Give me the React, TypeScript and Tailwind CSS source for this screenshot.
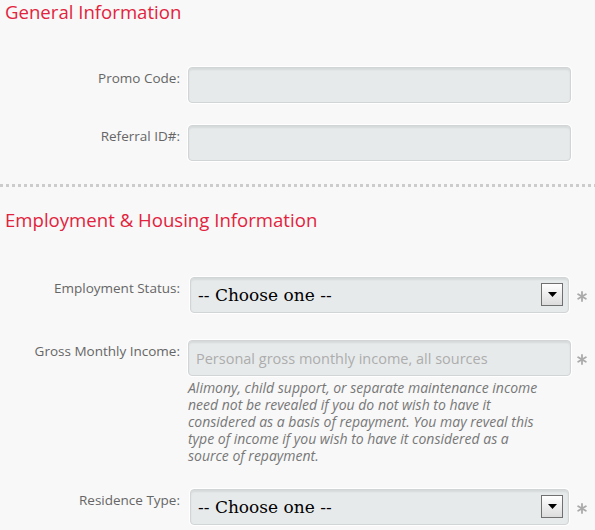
import type { ReactNode } from 'react';

const fieldBox =
  'h-[36px] rounded-[4px] border border-[#d2d5d6] bg-[#e7eaeb] shadow-[0_0_0_1px_#ffffff,inset_0_2px_2px_rgba(0,0,0,0.07)]';

function Asterisk() {
  return (
    <svg width="10" height="11" viewBox="0 0 10 11" className="mt-[14px] ml-[6px] shrink-0">
      <g stroke="#aaaaaa" strokeWidth="1.8" strokeLinecap="round">
        <line x1="5" y1="1" x2="5" y2="10" />
        <line x1="1.2" y1="3.3" x2="8.8" y2="7.7" />
        <line x1="1.2" y1="7.7" x2="8.8" y2="3.3" />
      </g>
    </svg>
  );
}

function Row({ label, children, required, className = '' }: { label: string; children: ReactNode; required?: boolean; className?: string }) {
  return (
    <div className={`flex items-start ${className}`}>
      <label className="w-[180px] shrink-0 pt-[2px] text-right text-[13.5px] leading-[18px] text-[#666666]">{label}</label>
      <div className="ml-2 w-[383px] shrink-0">{children}</div>
      {required && <Asterisk />}
    </div>
  );
}

function TextInput({ placeholder }: { placeholder?: string }) {
  return (
    <input
      type="text"
      placeholder={placeholder}
      className={`${fieldBox} block w-full px-[7px] text-[14.5px] text-[#333] outline-none placeholder:text-[#adadad]`}
    />
  );
}

function ChooseOne() {
  return (
    <div className={`${fieldBox} relative mx-[2px] flex items-center pl-[7px]`}>
      <span className="font-['DejaVu_Serif',serif] text-[17px] leading-[20px] text-black">-- Choose one --</span>
      <span className="absolute right-[5px] top-[5px] flex h-[23px] w-[22px] items-center justify-center border border-[#707070] bg-[linear-gradient(#ffffff,#dcdcdc)]">
        <svg width="9" height="5" viewBox="0 0 9 5">
          <path d="M0 0h9L4.5 5z" fill="#000" />
        </svg>
      </span>
    </div>
  );
}

function SectionTitle({ children }: { children: ReactNode }) {
  return <h2 className="px-[5px] text-[18.6px] leading-[24px] text-[#e2233d]">{children}</h2>;
}

export default function App() {
  return (
    <div className="min-h-[530px] w-[595px] overflow-hidden bg-[#f8f8f8] font-['Open_Sans',sans-serif]">
      <SectionTitle>General Information</SectionTitle>

      <Row label="Promo Code:" className="mt-[43px]">
        <TextInput />
      </Row>
      <Row label="Referral ID#:" className="mt-[22px]">
        <TextInput />
      </Row>

      <div className="mt-[23px] h-[3px] bg-[linear-gradient(to_right,#cccccc_50%,transparent_50%)] bg-[length:6px_3px]" />

      <div className="mt-[21px]">
        <SectionTitle>Employment &amp; Housing Information</SectionTitle>
      </div>

      <Row label="Employment Status:" required className="mt-[45px]">
        <ChooseOne />
      </Row>
      <Row label="Gross Monthly Income:" required className="mt-[27px]">
        <TextInput placeholder="Personal gross monthly income, all sources" />
        <p className="mt-[3px] pr-[20px] text-[14px] italic leading-[17px] text-[#777777]">
          Alimony, child support, or separate maintenance income need not be revealed if you do not wish to have it
          considered as a basis of repayment. You may reveal this type of income if you wish to have it considered as a
          source of repayment.
        </p>
      </Row>
      <Row label="Residence Type:" required className="mt-[25px]">
        <ChooseOne />
      </Row>
    </div>
  );
}
